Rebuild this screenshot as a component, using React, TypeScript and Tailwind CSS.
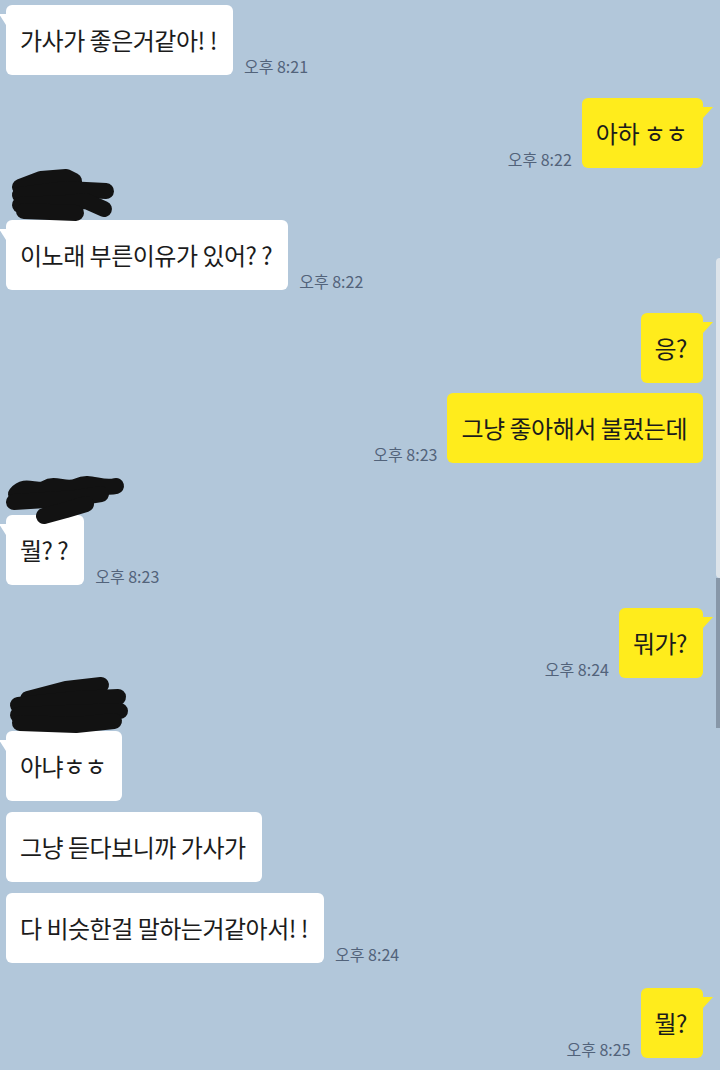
const FONT = { fontFamily: '"Noto Sans CJK KR", "Noto Sans", sans-serif' };

type Msg = { text: string; time?: string };
type Group = { me?: boolean; name?: number; extra?: string; msgs: Msg[] };

const groups: Group[] = [
  { msgs: [{ text: "가사가 좋은거같아! !", time: "오후 8:21" }] },
  { me: true, msgs: [{ text: "아하 ㅎㅎ", time: "오후 8:22" }] },
  { name: 0, msgs: [{ text: "이노래 부른이유가 있어? ?", time: "오후 8:22" }] },
  { me: true, msgs: [{ text: "응?" }, { text: "그냥 좋아해서 불렀는데", time: "오후 8:23" }] },
  { name: 1, msgs: [{ text: "뭘? ?", time: "오후 8:23" }] },
  { me: true, msgs: [{ text: "뭐가?", time: "오후 8:24" }] },
  {
    name: 2,
    extra: "gap-[11px]",
    msgs: [
      { text: "아냐ㅎㅎ" },
      { text: "그냥 듣다보니까 가사가" },
      { text: "다 비슷한걸 말하는거같아서! !", time: "오후 8:24" },
    ],
  },
  { me: true, extra: "mt-[2px]", msgs: [{ text: "뭘?", time: "오후 8:25" }] },
];

// hand-drawn black blots hiding the sender's name
const blots = [
  {
    top: "top-[-22px]",
    d: [
      "M14 18 L35 10 L60 8 L68 12",
      "M14 26 L60 20 L100 22",
      "M14 36 L60 34 L80 32 L98 40",
      "M18 42 L70 44",
    ],
  },
  {
    top: "top-[-8px]",
    d: [
      "M10 16 C20 4 30 16 40 10 S60 14 72 8 S95 12 110 8",
      "M8 24 L40 22 L70 20 L95 16",
      "M38 38 L60 32 L80 26",
    ],
  },
  {
    top: "top-[-24px]",
    d: ["M22 22 L60 12 L95 8", "M12 28 L70 22 L112 20", "M12 38 L60 36 L114 34", "M14 46 L70 48 L108 44"],
  },
];

function Blot({ kind }: { kind: number }) {
  const b = blots[kind];
  return (
    <svg width="124" height="60" className={`absolute left-0 z-10 overflow-visible ${b.top}`}>
      {b.d.map((d, i) => (
        <path key={i} d={d} fill="none" stroke="#121212" strokeWidth="16" strokeLinecap="round" strokeLinejoin="round" />
      ))}
    </svg>
  );
}

function Bubble({ me, tail, m }: { me?: boolean; tail: boolean; m: Msg }) {
  const time = m.time ? (
    <span className="mb-[1px] text-[16px] leading-none text-[#52637a]">{m.time}</span>
  ) : null;
  return (
    <div className={me ? "flex items-end justify-end gap-[10px]" : "flex items-end gap-[11px]"}>
      {me && time}
      <div
        className={`relative flex h-[70px] items-center rounded-[6px] pl-[14px] pr-[16px] text-[24px] tracking-[-0.5px] text-[#1b1b1b] ${
          me ? "bg-[#ffec1c]" : "bg-white"
        }`}
      >
        {tail && !me && (
          <span
            className="absolute left-[-7px] top-[9px] h-0 w-0"
            style={{ borderRight: "7px solid #fff", borderBottom: "11px solid transparent" }}
          />
        )}
        {tail && me && (
          <span
            className="absolute right-[-10px] top-[9px] h-0 w-0"
            style={{ borderLeft: "10px solid #ffec1c", borderBottom: "11px solid transparent" }}
          />
        )}
        <span className="whitespace-pre">{m.text}</span>
      </div>
      {!me && time}
    </div>
  );
}

export default function App() {
  return (
    <div
      className="relative flex h-[1070px] w-[720px] flex-col gap-[23px] overflow-hidden bg-[#b2c7da] pl-[6px] pr-[17px] pt-[5px]"
      style={FONT}
    >
      {groups.map((g, i) => (
        <div key={i} className={`flex flex-col ${g.extra ?? ""} ${g.extra?.startsWith("gap") ? "" : "gap-[10px]"}`}>
          {g.name !== undefined && (
            <div className="relative -mb-[10px] h-[29px]">
              <Blot kind={g.name} />
            </div>
          )}
          {g.msgs.map((m, j) => (
            <Bubble key={j} me={g.me} tail={j === 0} m={m} />
          ))}
        </div>
      ))}
      <div className="absolute right-0 top-[258px] h-[320px] w-[4px] rounded-l-sm bg-[#dde4ea]" />
      <div className="absolute right-0 top-[578px] h-[150px] w-[4px] bg-[#8797a8]" />
    </div>
  );
}
